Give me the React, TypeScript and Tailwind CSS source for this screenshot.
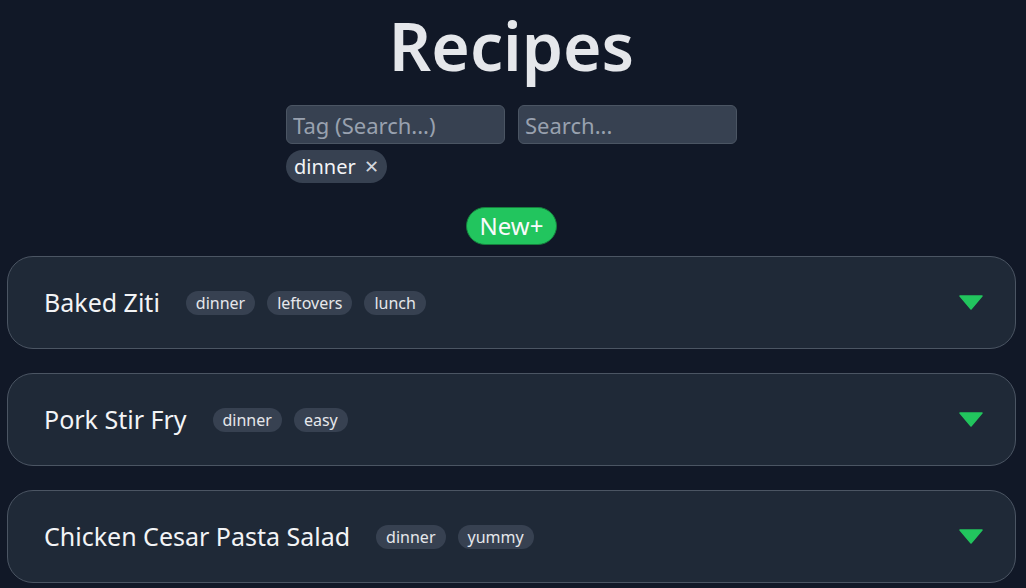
import React from 'react';

interface Recipe {
  name: string;
  tags: string[];
}

const recipes: Recipe[] = [
  { name: 'Baked Ziti', tags: ['dinner', 'leftovers', 'lunch'] },
  { name: 'Pork Stir Fry', tags: ['dinner', 'easy'] },
  { name: 'Chicken Cesar Pasta Salad', tags: ['dinner', 'yummy'] },
];

const RecipeCard = ({ recipe }: { recipe: Recipe }) => (
  <div className="flex items-center h-[93px] bg-[#1f2937] border border-[#4b5563] rounded-[26px] pl-[36px] pr-[32px]">
    <h2 className="text-[25px] text-gray-100 leading-none">{recipe.name}</h2>
    <div className="flex gap-3 ml-[26px]">
      {recipe.tags.map((t) => (
        <span key={t} className="bg-[#374151] text-gray-200 text-[16px] leading-none rounded-full px-[10px] py-[4px]">
          {t}
        </span>
      ))}
    </div>
    <svg className="ml-auto" width="24" height="15" viewBox="0 0 24 15">
      <path d="M1 1 L23 1 L12 14 Z" fill="#22c55e" stroke="#22c55e" strokeWidth="1.5" strokeLinejoin="round" />
    </svg>
  </div>
);

export default function App() {
  return (
    <div className="min-h-screen bg-[#111827] text-gray-200 pl-[7px] pr-[10px]" style={{ fontFamily: '"Noto Sans", "Open Sans", sans-serif' }}>
      <h1 className="text-center text-[66px] font-semibold leading-[90px] text-gray-200">Recipes</h1>
      <div className="w-[451px] mx-auto mt-[15px]">
        <div className="flex gap-[13px]">
          <input
            placeholder="Tag (Search...)"
            className="w-[219px] h-[39px] bg-[#374151] border border-[#4b5563] rounded-md px-[6px] text-[22px] text-gray-200 placeholder:text-gray-400 outline-none"
          />
          <input
            placeholder="Search..."
            className="w-[219px] h-[39px] bg-[#374151] border border-[#4b5563] rounded-md px-[6px] text-[22px] text-gray-200 placeholder:text-gray-400 outline-none"
          />
        </div>
        <div className="mt-[6px] flex">
          <span className="flex items-center gap-2 h-[33px] bg-[#374151] rounded-full px-[8px] text-[20px] text-gray-100">
            dinner <span className="text-[18px] text-gray-300">✕</span>
          </span>
        </div>
      </div>
      <div className="flex justify-center mt-[24px]">
        <button className="h-[38px] px-[13px] bg-[#22c55e] border border-[#15803d] rounded-full text-[24px] leading-none text-gray-50">New+</button>
      </div>
      <div className="flex flex-col gap-[24px] mt-[11px]">
        {recipes.map((r) => (
          <RecipeCard key={r.name} recipe={r} />
        ))}
      </div>
    </div>
  );
}
